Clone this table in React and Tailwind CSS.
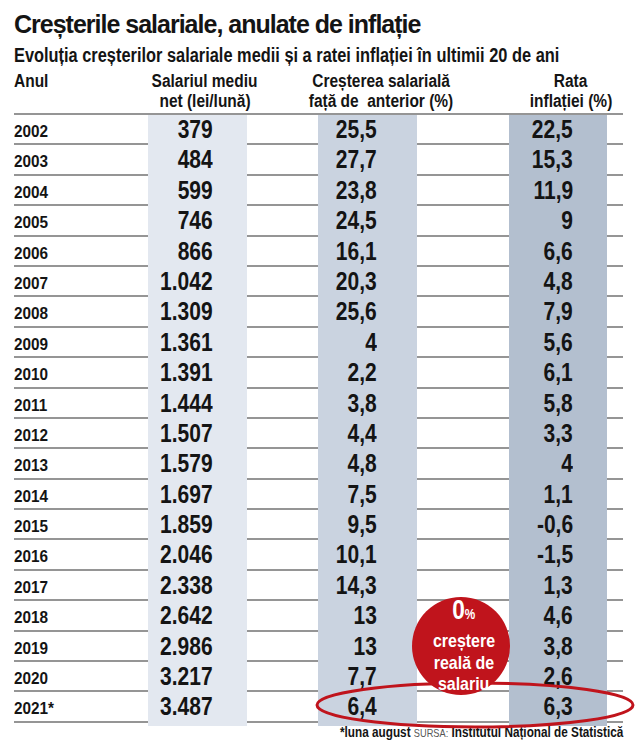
import React from "react";

const rows = [
  ["2002", "379", "25,5", "22,5"],
  ["2003", "484", "27,7", "15,3"],
  ["2004", "599", "23,8", "11,9"],
  ["2005", "746", "24,5", "9"],
  ["2006", "866", "16,1", "6,6"],
  ["2007", "1.042", "20,3", "4,8"],
  ["2008", "1.309", "25,6", "7,9"],
  ["2009", "1.361", "4", "5,6"],
  ["2010", "1.391", "2,2", "6,1"],
  ["2011", "1.444", "3,8", "5,8"],
  ["2012", "1.507", "4,4", "3,3"],
  ["2013", "1.579", "4,8", "4"],
  ["2014", "1.697", "7,5", "1,1"],
  ["2015", "1.859", "9,5", "-0,6"],
  ["2016", "2.046", "10,1", "-1,5"],
  ["2017", "2.338", "14,3", "1,3"],
  ["2018", "2.642", "13", "4,6"],
  ["2019", "2.986", "13", "3,8"],
  ["2020", "3.217", "7,7", "2,6"],
  ["2021*", "3.487", "6,4", "6,3"],
];

// the print font is a condensed sans, so squeeze Liberation Sans horizontally
function Narrow({ children, className = "" }) {
  return <span className={"inline-block whitespace-nowrap " + className}>{children}</span>;
}

function Row({ year, salary, growth, inflation }) {
  return (
    <div className="grid grid-cols-[134px_99px_71px_99px_92px_98px_16px] h-[30.4px] border-b-2 border-[#959595]">
      <div className="text-[17px] font-bold leading-[34px]">
        <Narrow className="origin-left scale-x-[0.9]">{year}</Narrow>
      </div>
      <div className="bg-[#e3e8f0] text-right pr-[34px] text-[25px] font-bold leading-[28.4px]">
        <Narrow className="origin-right scale-x-[0.84]">{salary}</Narrow>
      </div>
      <div />
      <div className="bg-[#cad3e0] text-right pr-[40px] text-[25px] font-bold leading-[28.4px]">
        <Narrow className="origin-right scale-x-[0.84]">{growth}</Narrow>
      </div>
      <div />
      <div className="bg-[#b3bfcf] text-right pr-[34px] text-[25px] font-bold leading-[28.4px]">
        <Narrow className="origin-right scale-x-[0.84]">{inflation}</Narrow>
      </div>
      <div />
    </div>
  );
}

export default function App() {
  return (
    <div className="relative w-[635px] h-[750px] overflow-hidden bg-white text-[#141414] font-[family-name:Liberation_Sans,Arial,sans-serif]">
      <div className="pl-[14px] pt-[10px]">
        <h1 className="text-[25px] font-bold leading-[28px] tracking-[-1px]">
          Creșterile salariale, anulate de inflație
        </h1>
        <div className="mt-[6px] text-[19.5px] font-bold leading-[22px]">
          <Narrow className="origin-left scale-x-[0.84]">
            Evoluția creșterilor salariale medii și a ratei inflației în ultimii 20 de ani
          </Narrow>
        </div>
      </div>

      <div className="ml-[14px] mt-[5px] grid grid-cols-[127px_128px_32px_160px_50px_120px] text-[18px] font-bold leading-[20px]">
        <div>
          <Narrow className="origin-left scale-x-[0.86]">Anul</Narrow>
        </div>
        <div className="flex flex-col items-center">
          <Narrow className="origin-center scale-x-[0.86]">Salariul mediu</Narrow>
          <Narrow className="origin-center scale-x-[0.86]">net (lei/lună)</Narrow>
        </div>
        <div />
        <div className="flex flex-col items-center">
          <Narrow className="origin-center scale-x-[0.86]">Creșterea salarială</Narrow>
          <Narrow className="origin-center scale-x-[0.86] whitespace-pre">față de  anterior (%)</Narrow>
        </div>
        <div />
        <div className="flex flex-col items-center">
          <Narrow className="origin-center scale-x-[0.86]">Rata</Narrow>
          <Narrow className="origin-center scale-x-[0.86]">inflației (%)</Narrow>
        </div>
      </div>

      <div className="ml-[14px] mt-[2px] w-[609px] border-t-2 border-[#959595]">
        {rows.map(([year, salary, growth, inflation]) => (
          <Row key={year} year={year} salary={salary} growth={growth} inflation={inflation} />
        ))}
      </div>

      <div className="mt-[1px] pr-[12px] text-right text-[14px] font-bold leading-[16px]">
        <Narrow className="origin-right scale-x-[0.84]">
          *luna august{"  "}
          <span className="font-normal text-[11px] text-[#555]">SURSA:</span>{" "}
          Institutul Național de Statistică
        </Narrow>
      </div>

      <svg className="absolute left-[314px] top-[681px]" width="322" height="50" viewBox="0 0 322 50">
        <ellipse cx="161" cy="24" rx="158" ry="22" fill="none" stroke="#c0141c" strokeWidth="3" />
      </svg>

      <div className="absolute left-[412px] top-[597px] w-[98px] h-[98px] rounded-full bg-[#c0141c] text-white flex flex-col items-center">
        <div className="mt-[1px] ml-[6px] leading-[24px] font-bold">
          <Narrow className="origin-center scale-x-[0.84]">
            <span className="text-[27px]">0</span>
            <span className="text-[14px]">%</span>
          </Narrow>
        </div>
        <div className="mt-[4px] ml-[6px] text-[19px] font-bold leading-[21.5px] flex flex-col items-center">
          <Narrow className="origin-center scale-x-[0.84]">creștere</Narrow>
          <Narrow className="origin-center scale-x-[0.84]">reală de</Narrow>
          <Narrow className="origin-center scale-x-[0.84]">salariu</Narrow>
        </div>
      </div>
    </div>
  );
}
